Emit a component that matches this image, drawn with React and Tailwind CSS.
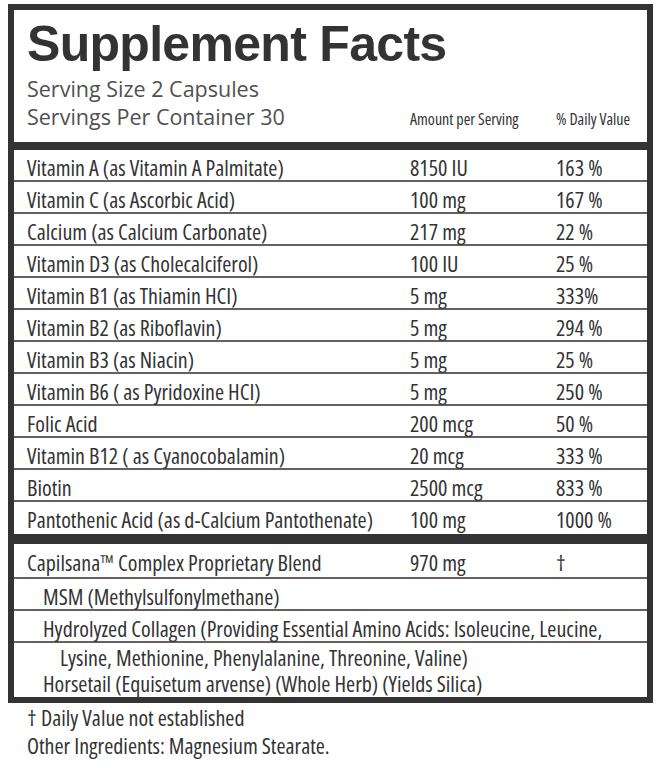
const nutrients = [
  ["Vitamin A (as Vitamin A Palmitate)", "8150 IU", "163 %"],
  ["Vitamin C (as Ascorbic Acid)", "100 mg", "167 %"],
  ["Calcium (as Calcium Carbonate)", "217 mg", "22 %"],
  ["Vitamin D3 (as Cholecalciferol)", "100 IU", "25 %"],
  ["Vitamin B1 (as Thiamin HCI)", "5 mg", "333%"],
  ["Vitamin B2 (as Riboflavin)", "5 mg", "294 %"],
  ["Vitamin B3 (as Niacin)", "5 mg", "25 %"],
  ["Vitamin B6 ( as Pyridoxine HCI)", "5 mg", "250 %"],
  ["Folic Acid", "200 mcg", "50 %"],
  ["Vitamin B12 ( as Cyanocobalamin)", "20 mcg", "333 %"],
  ["Biotin", "2500 mcg", "833 %"],
  ["Pantothenic Acid (as d-Calcium Pantothenate)", "100 mg", "1000 %"],
];

const cond = "font-['Open_Sans',sans-serif] [font-stretch:82%]";

export default function App() {
  return (
    <div className="w-[660px] h-[768px] bg-white pt-[4px] pl-[8px] text-[#333]">
      <div className="w-[645px] h-[699px] border-[6px] border-[#333]">
        {/* header */}
        <div className="h-[123px] pl-[13px]">
          <div className="mt-[9px] text-[50px] leading-[50px] font-bold tracking-[-0.7px] text-[#333] font-['Liberation_Sans',sans-serif]">
            Supplement Facts
          </div>
          <div className="mt-[6px] text-[21.5px] leading-[28px] font-normal text-[#505050] font-['Open_Sans',sans-serif]">
            Serving Size 2 Capsules
          </div>
          <div className="grid grid-cols-[383px_146px_1fr] items-baseline">
            <div className="text-[21.5px] leading-[28px] font-normal text-[#505050] font-['Open_Sans',sans-serif] whitespace-nowrap">
              Servings Per Container 30
            </div>
            <div className={`text-[16px] leading-[28px] whitespace-nowrap ${cond}`}>Amount per Serving</div>
            <div className={`text-[16px] leading-[28px] whitespace-nowrap ${cond}`}>% Daily Value</div>
          </div>
        </div>
        <div className="h-[8px] bg-[#333]" />

        {/* vitamins */}
        <div className={`text-[22px] ${cond}`}>
          {nutrients.map(([name, amount, dv], i) => (
            <div
              key={name}
              className={`grid grid-cols-[383px_146px_1fr] h-[32px] pl-[13px] pt-[5px] leading-[25px] ${
                i < nutrients.length - 1 ? "border-b-2 border-[#6a5f5c]" : ""
              }`}
            >
              <div className="whitespace-nowrap">{name}</div>
              <div>{amount}</div>
              <div>{dv}</div>
            </div>
          ))}
        </div>
        <div className="h-[10px] bg-[#333]" />

        {/* blend */}
        <div className={`text-[22px] ${cond}`}>
          <div className="grid grid-cols-[383px_146px_1fr] h-[35px] pl-[13px] pt-[6px] leading-[25px] border-b-2 border-[#6a5f5c]">
            <div className="whitespace-nowrap">Capilsana™ Complex Proprietary Blend</div>
            <div>970 mg</div>
            <div>†</div>
          </div>
          <div className="h-[32px] pl-[29px] pt-[5px] leading-[25px] border-b-2 border-[#6a5f5c]">
            MSM (Methylsulfonylmethane)
          </div>
          <div className="h-[32px] pl-[29px] pt-[5px] leading-[25px] border-b-2 border-[#6a5f5c] whitespace-nowrap">
            Hydrolyzed Collagen (Providing Essential Amino Acids: Isoleucine, Leucine,
          </div>
          <div className="pt-[1px] leading-[26px]">
            <div className="pl-[46px]">Lysine, Methionine, Phenylalanine, Threonine, Valine)</div>
            <div className="pl-[29px]">Horsetail (Equisetum arvense) (Whole Herb) (Yields Silica)</div>
          </div>
        </div>
      </div>

      {/* footnotes */}
      <div className={`pl-[19px] text-[22px] leading-[28px] ${cond}`}>
        <div>† Daily Value not established</div>
        <div>Other Ingredients: Magnesium Stearate.</div>
      </div>
    </div>
  );
}
